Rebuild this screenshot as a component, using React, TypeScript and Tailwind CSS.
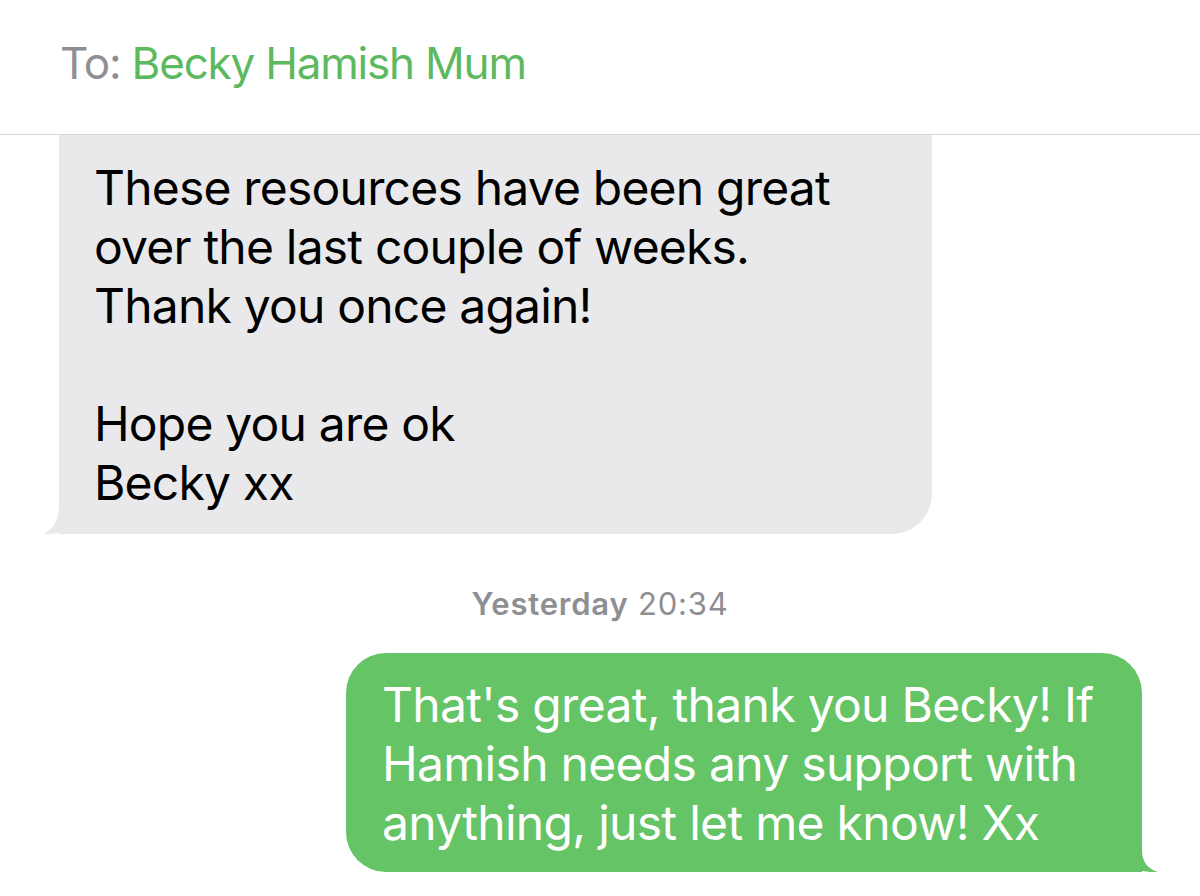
import React from "react";

export default function App() {
  return (
    <div
      className="w-[1200px] h-[896px] bg-white overflow-hidden flex flex-col"
      style={{ fontFamily: "Inter, 'Noto Sans', sans-serif" }}
    >
      <div className="h-[135px] shrink-0 border-b border-[#d6d6d9] pl-[60px] pt-[41px]">
        <div className="text-[44px] leading-[44px] tracking-[-1.2px]">
          <span className="text-[#8e8e93]">To: </span>
          <span className="text-[#5db960]">Becky Hamish Mum</span>
        </div>
      </div>

      <div className="relative ml-[59px] w-[873px] bg-[#e9e9eb] rounded-br-[40px] pt-[23px] pb-[22px] pl-[35px] text-[48px] leading-[59px] text-black tracking-[-0.8px]">
        <svg
          className="absolute left-[-16px] bottom-0"
          width="90"
          height="50"
          viewBox="0 0 90 50"
        >
          <path
            d="M16 0 L16 21 C16 36 10 46 0 50 C12 51 25 47 35 41 C44 47 56 50 72 50 L90 50 L90 0 Z"
            fill="#e9e9eb"
          />
        </svg>
        <span className="relative">
          These resources have been great
          <br />
          over the last couple of weeks.
          <br />
          Thank you once again!
          <br />
          <br />
          Hope you are ok
          <br />
          Becky xx
        </span>
      </div>

      <div className="mt-[55px] text-center text-[31px] leading-[30px] tracking-[0.8px] text-[#8e8e93]">
        <span className="font-semibold">Yesterday</span> 20:34
      </div>

      <div className="relative ml-[346px] mt-[34px] w-[796px] bg-[#65c466] rounded-tl-[40px] rounded-tr-[40px] rounded-bl-[40px] pt-[22px] pb-[20px] pl-[36px] text-[48px] leading-[59px] text-white tracking-[-0.7px]">
        <svg
          className="absolute right-[-16px] bottom-0"
          width="90"
          height="50"
          viewBox="0 0 90 50"
        >
          <path
            d="M74 0 L74 28 C74 40 80 47 90 50 C78 51 63 47 52 40 C44 46 32 50 17 50 L0 50 L0 0 Z"
            fill="#65c466"
          />
        </svg>
        <span className="relative">
          That's great, thank you Becky! If
          <br />
          Hamish needs any support with
          <br />
          anything, just let me know! Xx
        </span>
      </div>
    </div>
  );
}
